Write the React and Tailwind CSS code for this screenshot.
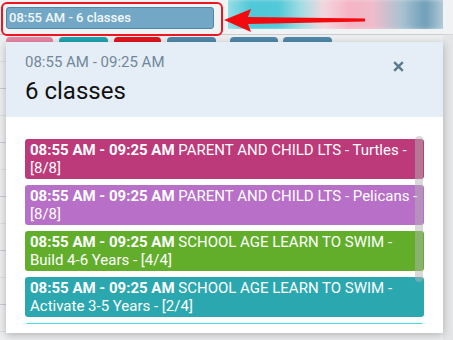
import React from 'react';

const tabs = [
    { w: 'w-[47px]', c: 'bg-[#e985a5]' },
    { w: 'w-[49px]', c: 'bg-[#1ea3b1]' },
    { w: 'w-[47px]', c: 'bg-[#e3141d]' },
    { w: 'w-[49px]', c: 'bg-[#4f88a9]' },
];
const tabs2 = [
    { w: 'w-[48px]', c: 'bg-[#4f88a9]' },
    { w: 'w-[49px]', c: 'bg-[#4f88a9]' },
];

const classes = [
    { name: 'PARENT AND CHILD LTS - Turtles - [8/8]', bg: 'bg-[#bc397a]' },
    { name: 'PARENT AND CHILD LTS - Pelicans - [8/8]', bg: 'bg-[#b86fc8]' },
    { name: 'SCHOOL AGE LEARN TO SWIM - Build 4-6 Years - [4/4]', bg: 'bg-[#62ae2b]' },
    { name: 'SCHOOL AGE LEARN TO SWIM - Activate 3-5 Years - [2/4]', bg: 'bg-[#2ba7b0]' },
];

export default function App() {
    return (
        <div className="relative w-[453px] h-[340px] overflow-hidden bg-[#eceef0] font-['Roboto',sans-serif] flex">
            <div className="w-[443px] flex flex-col">
                {/* top bar with the highlighted button */}
                <div className="h-[35px] flex border-b border-[#c9cdd1] bg-[#f1f2f4]">
                    <div className="ml-[1px] mt-[2px] w-[222px] h-[34px] border-2 border-[#ec1620] rounded-[6px] pl-[3px] pt-[3px] flex-shrink-0 relative z-10">
                        <div className="w-[208px] h-[22px] bg-[#72a8c5] border border-[#4d88a9] rounded-[3px] text-[13px] leading-[20px] font-medium text-[#f3f8fb] pl-[2px]">
                            08:55 AM - 6 classes
                        </div>
                    </div>
                    <div className="ml-[5px] w-[215px] h-[29px] overflow-hidden">
                        <div className="w-full h-full blur-[2px] scale-110 bg-[linear-gradient(90deg,#b8e6ec_0%,#4ec8d8_14%,#52c9d8_26%,#a8dde4_36%,#f3d6de_45%,#f6b3c6_56%,#efbccb_66%,#a9c2d2_78%,#6f9fb8_88%,#d9e3e9_100%)]" />
                    </div>
                </div>
                {/* calendar rows */}
                <div className="h-[27px] border-b border-[#dde0e3] flex items-start pt-[2px] pl-[6px]">
                    <div className="flex gap-[6px]">
                        {tabs.map((t, i) => <div key={i} className={`${t.w} h-[20px] rounded-t-[4px] ${t.c}`} />)}
                    </div>
                    <div className="flex gap-[5px] ml-[14px]">
                        {tabs2.map((t, i) => <div key={i} className={`${t.w} h-[20px] rounded-t-[4px] ${t.c}`} />)}
                    </div>
                </div>
                {[0, 1, 2, 3, 4, 5, 6, 7, 8, 9].map(i => (
                    <div key={i} className={`h-[27px] flex-shrink-0 border-b ${i % 2 === 0 ? 'border-[#c9cdd1]' : 'border-[#dde0e3]'}`} />
                ))}
            </div>
            <div className="w-[10px] bg-[#e3e5e7] flex flex-col">
                <div className="h-[35px] bg-[#f1f2f4] border-b border-[#d5d8db]" />
            </div>

            {/* red arrow */}
            <svg className="absolute left-[222px] top-[6px]" width="150" height="30" viewBox="0 0 150 30">
                <polygon points="2,14 29,3 26,11 143,12.5 143,15.5 26,18 29,26" fill="#f20a0f" />
            </svg>

            {/* popover */}
            <div className="absolute left-[6px] top-[42px] w-[437px] h-[291px] bg-white shadow-[0_2px_8px_rgba(0,0,0,0.25)] flex flex-col">
                <div className="h-[75px] bg-[#e5eef6] flex justify-between pl-[19px] pr-[39px] pt-[10px]">
                    <div>
                        <div className="text-[15px] leading-[20px] text-[#72879a]">08:55 AM - 09:25 AM</div>
                        <div className="mt-[5px] text-[24px] leading-[28px] text-[#111]">6 classes</div>
                    </div>
                    <svg className="mt-[9px]" width="11" height="11" viewBox="0 0 11 11">
                        <path d="M1.2 1.2 L9.8 9.8 M9.8 1.2 L1.2 9.8" stroke="#5b7a90" strokeWidth="2.4" strokeLinecap="butt" />
                    </svg>
                </div>
                <div className="px-[19px] pt-[19px]">
                    <div className="relative h-[188px] overflow-hidden pt-[3px] flex flex-col gap-[6px]">
                        {classes.map((c, i) => (
                            <div key={i} className={`${c.bg} flex-shrink-0 rounded-[3px] px-[5px] py-[2px] text-[15px] leading-[18px] text-white`}>
                                <span className="font-bold">08:55 AM - 09:25 AM</span> {c.name}
                            </div>
                        ))}
                        {/* next item, scrolled out of view */}
                        <div className="h-[40px] flex-shrink-0 rounded-[3px] bg-[#40dde6]" />
                        <div className="absolute left-[390px] top-0 w-[8px] h-[146px] rounded-[4px] bg-[rgba(180,180,180,0.5)]" />
                    </div>
                </div>
            </div>
        </div>
    );
}
